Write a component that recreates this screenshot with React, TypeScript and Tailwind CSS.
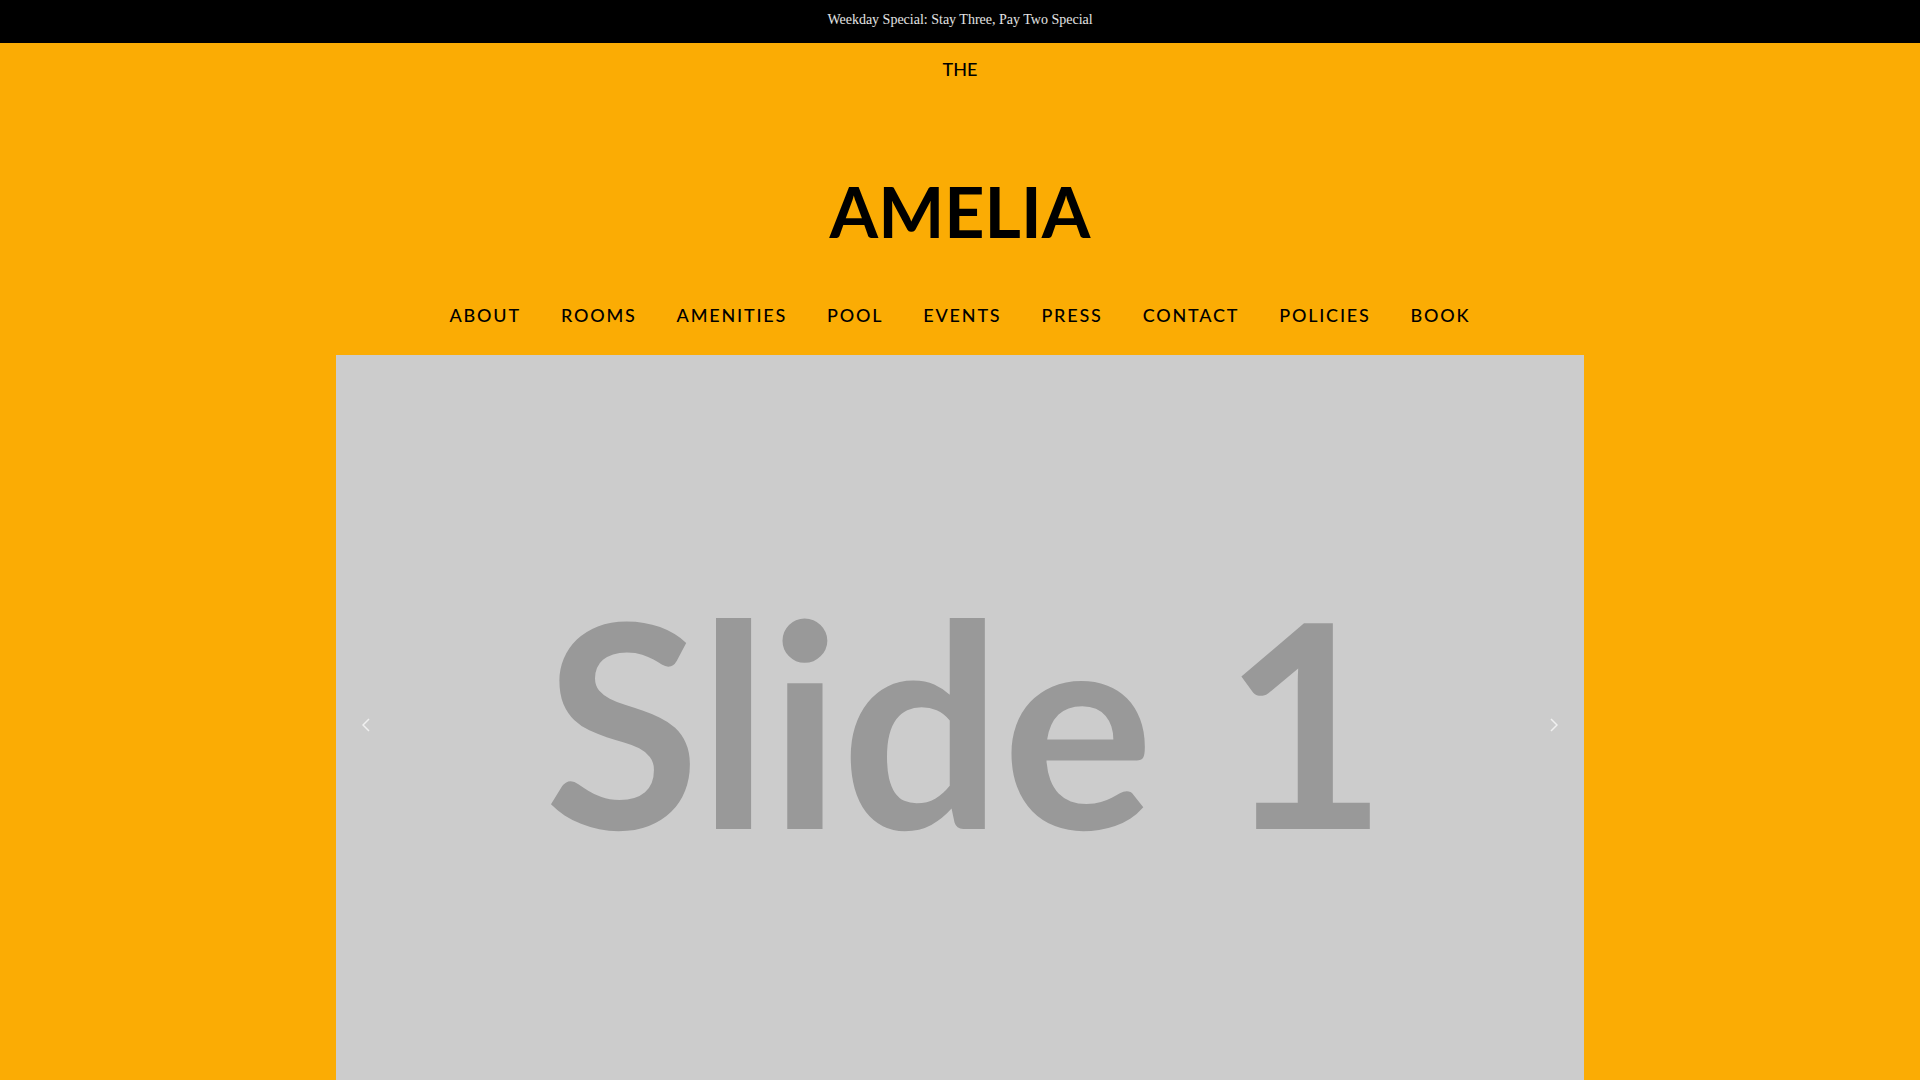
const navLinks = [
    { label: "About", href: "#about" },
    { label: "Rooms", href: "#rooms" },
    { label: "Amenities", href: "#amenities" },
    { label: "Pool", href: "#pool" },
    { label: "Events", href: "#events" },
    { label: "Press", href: "#press" },
    { label: "Contact", href: "#contact" },
    { label: "Policies", href: "#policies" },
    { label: "Book", href: "#book" },
]

function Chevron({ points }: { points: string }) {
    return (
        <svg width="8" height="14" viewBox="0 0 8 14" fill="none" stroke="#f0f0f0" strokeWidth="1.5" aria-hidden="true">
            <polyline points={points} />
        </svg>
    )
}

export default function App() {
    return (
        <div className="h-screen overflow-hidden bg-[#fbac04] text-black font-['Lato',sans-serif]">
            {/* Announcement bar */}
            <div className="bg-black pt-2 pb-[11px] text-center">
                <a href="#specials" className="block text-sm leading-6 text-white/90 font-['Liberation_Serif',serif]">
                    Weekday Special: Stay Three, Pay Two Special
                </a>
            </div>

            <header className="flex flex-col items-center">
                <a href="#home" className="flex flex-col items-center pt-4">
                    <span className="text-lg leading-5 font-medium">THE</span>
                    <span className="mt-[92px] text-[70px] leading-[80px] font-bold">AMELIA</span>
                </a>

                <nav className="mt-12 mb-6" aria-label="Main">
                    <ul className="flex flex-wrap justify-center gap-x-10">
                        {navLinks.map((link) => (
                            <li key={link.label}>
                                <a href={link.href} className="block text-lg leading-8 font-medium uppercase tracking-widest">
                                    {link.label}
                                </a>
                            </li>
                        ))}
                    </ul>
                </nav>
            </header>

            {/* Slideshow */}
            <section className="w-[65%] mx-auto aspect-[1248/740] bg-[#cccccc] px-4 flex items-center justify-between" aria-label="Slideshow">
                <button type="button" className="p-2.5" aria-label="Previous slide">
                    <Chevron points="7,1 1,7 7,13" />
                </button>
                <p className="pl-3 pb-3 text-[284px] leading-none font-bold text-[#999999] whitespace-nowrap">Slide 1</p>
                <button type="button" className="p-2.5" aria-label="Next slide">
                    <Chevron points="1,1 7,7 1,13" />
                </button>
            </section>
        </div>
    )
}
